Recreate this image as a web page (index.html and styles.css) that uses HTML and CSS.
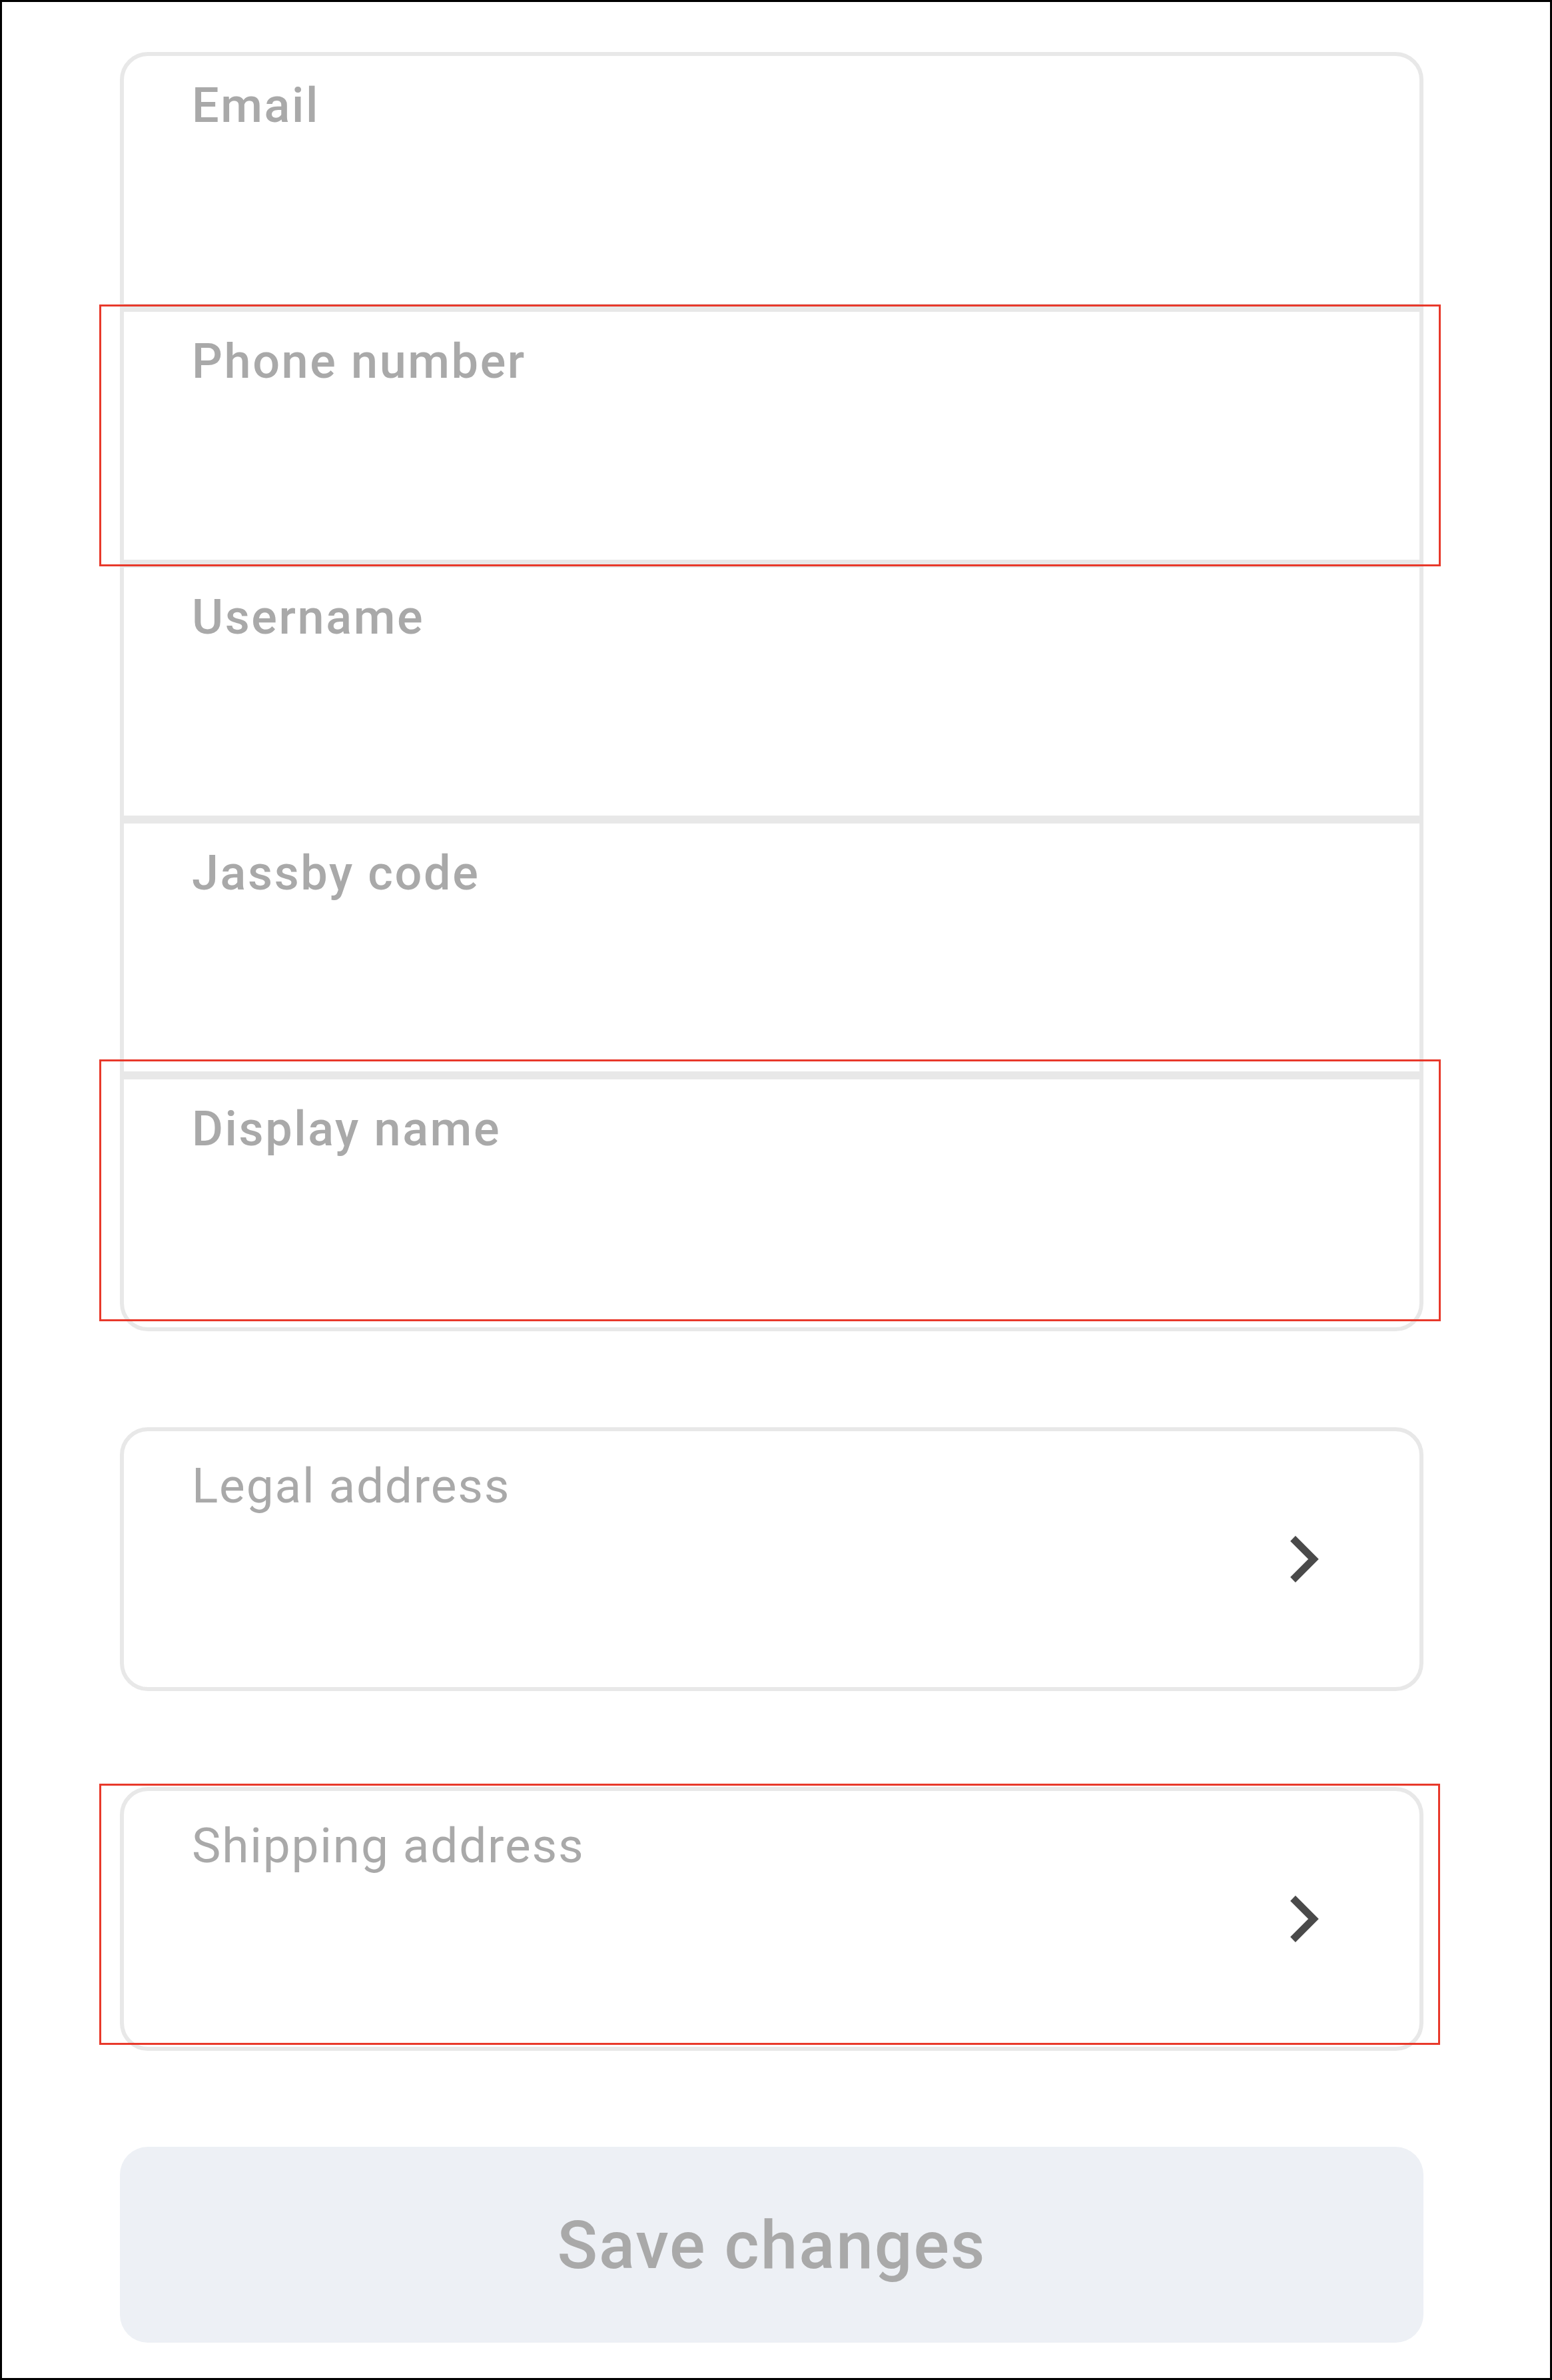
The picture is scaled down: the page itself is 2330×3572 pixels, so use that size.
FILE: index.html
```html
<!DOCTYPE html>
<html lang="en">
<head>
<meta charset="utf-8">
<title>Edit profile</title>
<link rel="stylesheet" href="styles.css">
</head>
<body>
<div class="frame">
  <main class="form">
    <section class="card group">
      <div class="field"><span class="label">Email</span></div>
      <div class="field hl hl-phone"><span class="label">Phone number</span></div>
      <div class="field"><span class="label">Username</span></div>
      <div class="field"><span class="label">Jassby code</span></div>
      <div class="field hl hl-display"><span class="label">Display name</span></div>
    </section>
    <section class="card link">
      <span class="label light">Legal address</span>
      <svg class="chev" width="50" height="76" viewBox="0 0 50 76" aria-hidden="true"><polyline points="7,7 38,38 7,69" fill="none" stroke="#4a4a4a" stroke-width="11" stroke-linecap="butt" stroke-linejoin="miter"/></svg>
    </section>
    <section class="card link hl hl-ship">
      <span class="label light">Shipping address</span>
      <svg class="chev" width="50" height="76" viewBox="0 0 50 76" aria-hidden="true"><polyline points="7,7 38,38 7,69" fill="none" stroke="#4a4a4a" stroke-width="11" stroke-linecap="butt" stroke-linejoin="miter"/></svg>
    </section>
    <button class="save" type="button">Save changes</button>
  </main>
</div>
</body>
</html>
```

FILE: styles.css
```css
html, body {
  margin: 0;
  padding: 0;
  background: #ffffff;
}

.frame {
  box-sizing: border-box;
  width: 2330px;
  height: 3572px;
  border: 3px solid #000000;
  padding: 75px 0 0 177px;
  font-family: Roboto, "Liberation Sans", sans-serif;
}

.form {
  width: 1957px;
  display: flex;
  flex-direction: column;
  gap: 144px;
}

.card {
  box-sizing: border-box;
  border: 6px solid #e8e8e8;
  border-radius: 42px;
  background: #ffffff;
}

.group {
  display: flex;
  flex-direction: column;
}

.field {
  box-sizing: border-box;
  height: 372px;
  padding: 39px 0 0 102px;
}

.field + .field {
  height: 384px;
  border-top: 12px solid #e8e8e8;
}

.label {
  display: block;
  font-size: 72px;
  line-height: 72px;
  font-weight: 500;
  letter-spacing: 2.6px;
  color: #a9a9a9;
  white-space: nowrap;
}

.label.light {
  font-size: 73px;
  line-height: 73px;
  font-weight: 400;
  letter-spacing: 1.8px;
}

.link {
  height: 396px;
  display: flex;
  align-items: center;
  padding: 0 147px 0 102px;
}

.link .label {
  align-self: flex-start;
  margin-top: 46px;
}

.chev {
  display: block;
  margin-left: auto;
  flex: none;
}

.save {
  box-sizing: border-box;
  width: 100%;
  height: 294px;
  border: none;
  border-radius: 42px;
  background: #edf0f5;
  color: #a9a9a9;
  font-family: Roboto, "Liberation Sans", sans-serif;
  font-size: 100px;
  font-weight: 500;
  letter-spacing: 2px;
  padding: 0;
}

/* review annotation outlines */
.hl {
  position: relative;
}

.hl::after {
  content: "";
  position: absolute;
  border: 3px solid #e8392b;
  pointer-events: none;
}

.hl-phone::after {
  top: -11px;
  bottom: -10px;
  left: -37px;
  right: -32px;
}

.hl-display::after {
  top: -30px;
  bottom: 9px;
  left: -37px;
  right: -32px;
}

.hl-ship::after {
  top: -11px;
  bottom: 3px;
  left: -37px;
  right: -31px;
}
```
